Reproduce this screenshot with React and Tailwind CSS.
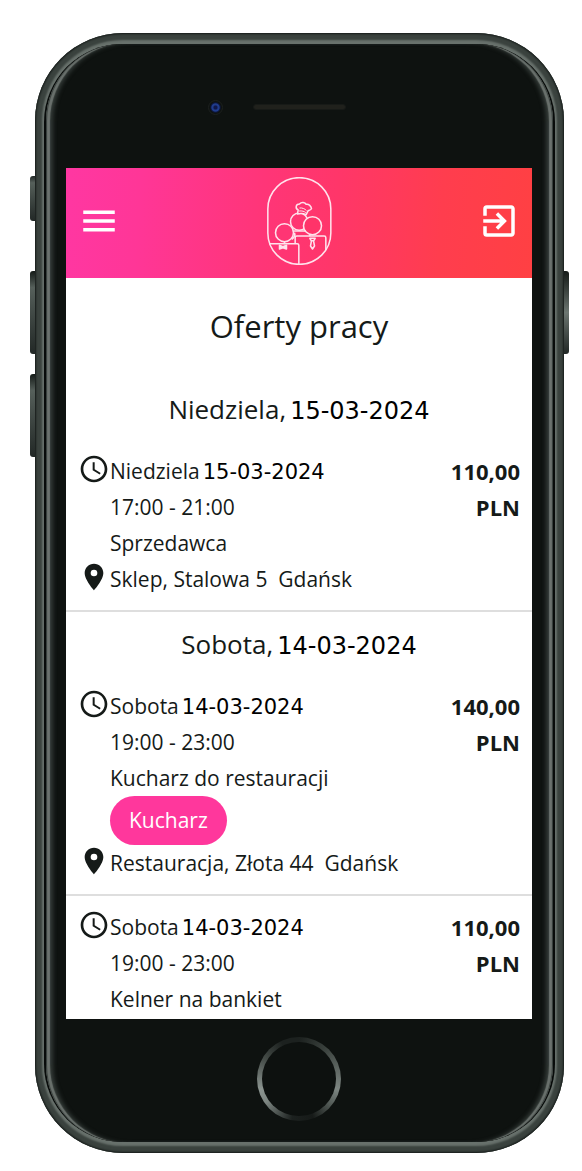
import React from "react";
import { MdExitToApp, MdMenu, MdPlace, MdSchedule } from "react-icons/md";

const days = [
  {
    name: "Niedziela",
    date: "15-03-2024",
    offers: [
      {
        hours: "17:00 - 21:00",
        job: "Sprzedawca",
        place: "Sklep, Stalowa 5",
        city: "Gdańsk",
        pay: "110,00",
      },
    ],
  },
  {
    name: "Sobota",
    date: "14-03-2024",
    offers: [
      {
        hours: "19:00 - 23:00",
        job: "Kucharz do restauracji",
        tag: "Kucharz",
        place: "Restauracja, Złota 44",
        city: "Gdańsk",
        pay: "140,00",
      },
      { hours: "19:00 - 23:00", job: "Kelner na bankiet", pay: "110,00" },
    ],
  },
];

function Logo() {
  return (
    <svg
      className="h-[88px] w-[65px]"
      viewBox="52 35 194 264"
      fill="none"
      stroke="#ffe3ec"
      strokeWidth="4.6"
      strokeLinejoin="round"
      role="img"
      aria-label="Logo"
    >
      <rect x="54" y="37" width="189" height="260" rx="94" />
      <circle cx="148" cy="169" r="26" />
      <path d="M143 146l2-12c-9-4-8-18 4-18 6-7 17-5 20 1 8-2 15 6 16 13-1 4-7 5-10 6l-6 12c-8-4-17-5-26-2z" fill="#ff3470" />
      <path d="M149 128c8-1 16 2 21 8M148 137c8-1 16 1 20 5" strokeWidth="3" />
      <circle cx="104" cy="202" r="27" fill="#ff3574" />
      <circle cx="188" cy="181" r="27" fill="#ff3469" />
      <path d="M132 197h36M126 222c8-6 11-12 8-20M104 229v8M180 208v5" />
      <path d="M58 235h84q5 0 5 5v57" />
      <path d="M136 235v-18q0-5 5-5h82q5 0 5 5v37" />
      <path d="M89 240l10 4 11-4v11l-11-4-10 4z" fill="#ffe3ec" />
      <path d="M180 219h16l-4 7h-8zM185 226l-3 16 6 9 6-9-3-16" />
    </svg>
  );
}

function Offer({ offer, day }) {
  return (
    <li className="flex justify-between border-[#dedede] px-3 not-last:border-b-2 not-last:pb-[13px] [li+&]:pt-[13px]">
      <div className="text-[21px] leading-9">
        <div className="flex h-9">
          <MdSchedule className="size-8 shrink-0" aria-hidden="true" />
          <p className="flex items-baseline gap-[3px] whitespace-nowrap">
            {day.name}
            <time className="font-['DejaVu_Sans',sans-serif] text-black">{day.date}</time>
          </p>
        </div>
        <p className="pl-8">{offer.hours}</p>
        <p className="pl-8">{offer.job}</p>
        {offer.tag && (
          <div className="flex pl-8">
            <span className="rounded-full bg-[#ff379c] px-[19px] py-[6px] leading-[37px] text-white">
              {offer.tag}
            </span>
          </div>
        )}
        {offer.place && (
          <div className="flex h-9">
            <MdPlace className="size-8 shrink-0" aria-hidden="true" />
            <p className="whitespace-pre">
              {offer.place}
              {"  "}
              {offer.city}
            </p>
          </div>
        )}
      </div>
      <p className="w-18 text-right text-[22px] leading-9 font-bold">{offer.pay} PLN</p>
    </li>
  );
}

function Screen() {
  return (
    <div className="overflow-hidden bg-white pb-[2px] font-['Open_Sans',sans-serif] text-[#151a18]">
      <header className="flex h-[110px] items-center justify-between bg-[linear-gradient(94deg,#ff37a2_0%,#ff3697_16%,#ff3578_42%,#ff3669_58%,#ff3d4e_80%,#ff4043_100%)] px-3 pb-1 text-white">
        <button type="button" aria-label="Menu">
          <MdMenu className="size-[42px]" />
        </button>
        <Logo />
        <button type="button" aria-label="Wyloguj">
          <MdExitToApp className="size-[42px]" />
        </button>
      </header>
      <main>
        <h1 className="pt-6 pb-[27px] text-center text-[31px] leading-[48px]">Oferty pracy</h1>
        {days.map((day) => (
          <section key={day.date} className="border-[#dedede] not-last:border-b-2 not-last:pb-[13px]">
            <h2 className="flex items-baseline justify-center gap-1 pt-[14px] pb-6 text-[26px] leading-9">
              {day.name},
              <time className="font-['DejaVu_Sans',sans-serif] text-[24px] text-black">{day.date}</time>
            </h2>
            <ul>
              {day.offers.map((offer) => (
                <Offer key={offer.job} offer={offer} day={day} />
              ))}
            </ul>
          </section>
        ))}
      </main>
    </div>
  );
}

export default function App() {
  return (
    <div className="min-h-screen bg-white pt-[33px] pr-[18px] pb-[17px] pl-[35px]">
      <div className="relative">
        <i className="absolute top-[143px] -left-[5px] h-[45px] w-2 rounded-l-[3px] bg-linear-to-b from-[#222826] via-[#56605b] via-15% to-[#222826]" />
        <i className="absolute top-[238px] -left-[5px] h-[83px] w-2 rounded-l-[3px] bg-linear-to-b from-[#161c19] via-[#56605b] via-20% to-[#222826]" />
        <i className="absolute top-[341px] -left-[5px] h-[83px] w-2 rounded-l-[3px] bg-linear-to-b from-[#161c19] via-[#56605b] via-20% to-[#222826]" />
        <i className="absolute top-[238px] -right-[5px] h-[83px] w-2 rounded-r-[3px] bg-linear-to-b from-[#161c19] via-[#6c7671] via-50% to-[#222826]" />
        <div className="relative rounded-[88px] bg-[#68716c] px-[9px] py-[11px] shadow-[inset_0_0_2px_1px_#161b19,inset_0_0_2px_7px_#3a423e]">
          <div className="rounded-[78px] bg-[#080b0a] px-[2px]">
            <div className="rounded-[77px] bg-[#0e1210] pr-[21px] pl-5 shadow-[inset_2px_0_1px_-1px_#343b38,inset_-2px_0_1px_-1px_#343b38,inset_5px_0_1px_-1px_#6b726e,inset_-5px_0_1px_-1px_#6b726e,inset_9px_0_4px_-2px_#343b38,inset_-9px_0_4px_-2px_#343b38]">
              <div className="flex h-[124px] items-center justify-center pt-[2px]">
                <div className="relative h-[6px] w-[93px] rounded-full border border-[#171a17] bg-[#20211c]">
                  <i className="absolute -top-[5px] -left-[46px] size-[15px] rounded-full border border-[#1c201e] bg-[radial-gradient(circle,#10184a_0_15%,#203c8c_30%_40%,#0c1740_50%,#0e1210_62%)]" />
                </div>
              </div>
              <Screen />
              <div className="flex h-[123px] items-center justify-center pb-1">
                <button
                  type="button"
                  aria-label="Ekran główny"
                  className="size-[84px] rounded-full bg-[conic-gradient(#1c211f_0deg,#39403c_40deg,#7d8682_105deg,#505854_130deg,#161a18_160deg,#1c211f_190deg,#7d8682_235deg,#8b9490_255deg,#454c48_300deg,#1c211f_335deg)] p-[5px]"
                >
                  <span className="block size-full rounded-full bg-[#0d110f]" />
                </button>
              </div>
            </div>
          </div>
        </div>
      </div>
    </div>
  );
}
